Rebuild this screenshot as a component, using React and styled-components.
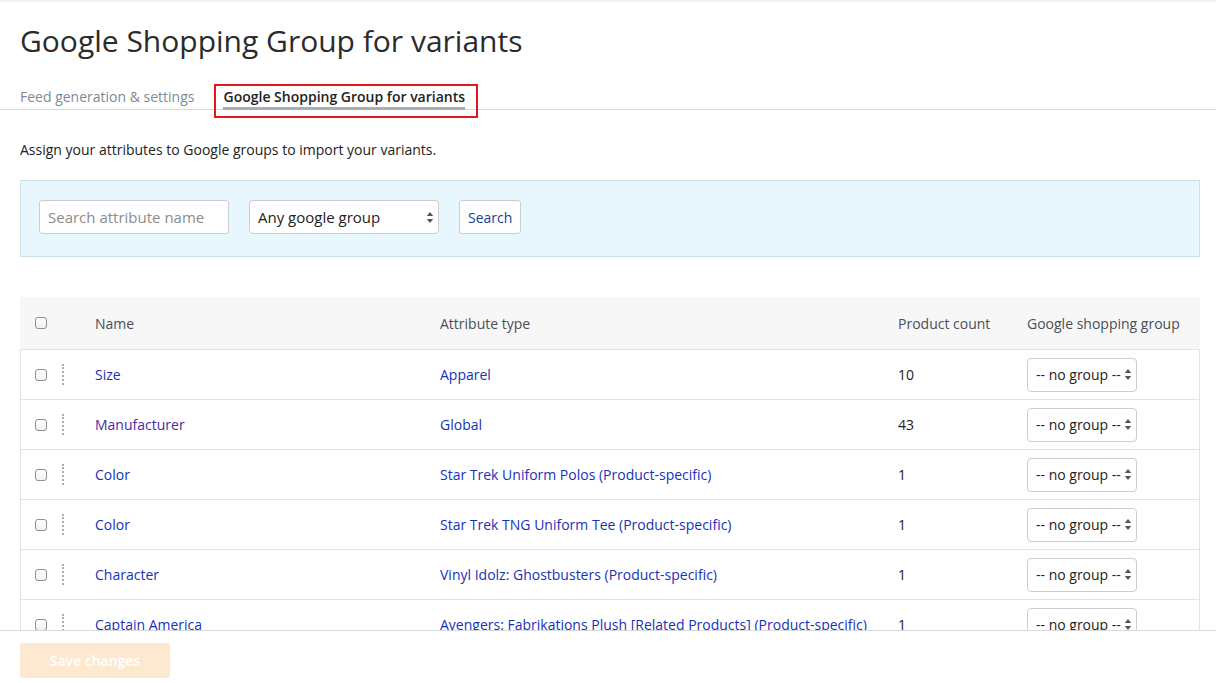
import React from "react";
import styled, { createGlobalStyle } from "styled-components";

const Global = createGlobalStyle`
  html, body { margin: 0; padding: 0; background: #fff; overflow: hidden; }
  body { font-family: "Open Sans", "Liberation Sans", sans-serif; color: #333; }
  * { box-sizing: border-box; }
`;

const Page = styled.div`
  height: 683px;
  border-top: 2px solid #f3f3f3;
  overflow: hidden;
`;

const Header = styled.div`
  padding: 0 20px;
`;

const Title = styled.h1`
  margin: 0;
  padding-top: 20px;
  font-size: 30px;
  font-weight: 400;
  line-height: 38px;
  color: #2b2b2b;
`;

const Tabs = styled.div`
  display: flex;
  align-items: flex-end;
  gap: 29px;
  margin-top: 27px;
  padding: 0 20px;
  border-bottom: 1px solid #d9d9d9;
`;

const Tab = styled.div`
  position: relative;
  font-size: 14px;
  line-height: 20px;
  color: ${(p) => (p.$active ? "#222" : "#7d8a96")};
  font-weight: ${(p) => (p.$active ? 600 : 400)};
  border-bottom: 3px solid ${(p) => (p.$active ? "#a6adb4" : "transparent")};
  margin-bottom: -1px;
  ${(p) =>
    p.$active &&
    `
    &::after {
      content: "";
      position: absolute;
      left: -9px; right: -13px; top: -3px; bottom: -11px;
      border: 2px solid #e3161b;
    }
  `}
`;

const Body = styled.div`
  padding: 0 16px 0 20px;
`;

const Intro = styled.p`
  margin: 30px 0 20px;
  font-size: 14px;
  line-height: 20px;
  color: #222;
`;

const Filters = styled.div`
  display: flex;
  align-items: flex-start;
  gap: 20px;
  height: 77px;
  padding: 19px 18px 0;
  background: #e8f6fd;
  border: 1px solid #cde0ea;
`;

const Input = styled.div`
  width: 190px;
  height: 34px;
  border: 1px solid #c9ced3;
  border-radius: 3px;
  background: #fff;
  padding: 0 8px;
  display: flex;
  align-items: center;
  font-size: 15px;
  color: #8c8c8c;
`;

const SelectBox = styled.div`
  width: ${(p) => p.$w}px;
  height: 34px;
  border: 1px solid #c9ced3;
  border-radius: 4px;
  background: #fff;
  padding: 0 4px 0 8px;
  display: flex;
  align-items: center;
  justify-content: space-between;
  font-size: ${(p) => p.$fs || 14}px;
  color: #222;
  white-space: nowrap;
`;

const Button = styled.div`
  height: 34px;
  padding: 0 8px;
  border: 1px solid #c9ced3;
  border-radius: 3px;
  background: #fff;
  display: flex;
  align-items: center;
  font-size: 14px;
  color: #1a3d8f;
`;

const Table = styled.div`
  margin-top: 40px;
`;

const Row = styled.div`
  display: grid;
  grid-template-columns: 33px 41px 345px 458px 129px 1fr;
  align-items: center;
  height: ${(p) => (p.$head ? 53 : 50)}px;
  background: ${(p) => (p.$head ? "#f7f7f7" : "#fff")};
  border-bottom: 1px solid #e3e3e3;
  border-left: 1px solid ${(p) => (p.$head ? "transparent" : "#e3e3e3")};
  border-right: 1px solid ${(p) => (p.$head ? "transparent" : "#e3e3e3")};
  font-size: 14px;
  color: #222;
`;

const Cell = styled.div`
  white-space: nowrap;
  color: ${(p) => (p.$head ? "#4a4f55" : "inherit")};
`;

const CheckCell = styled.div`
  display: flex;
  padding-left: 14px;
`;

const Check = styled.span`
  display: block;
  width: 12px;
  height: 12px;
  border: 1px solid #8f8f8f;
  border-radius: 3px;
  background: linear-gradient(#fff, #f1f1f1);
`;

const Handle = styled.span`
  display: block;
  margin-left: 8px;
  width: 0;
  height: 21px;
  border-left: 2px dotted #a9b0b8;
`;

const Link = styled.span`
  color: ${(p) => (p.$visited ? "#4b2aa8" : "#1732b8")};
`;

const Arrows = () => (
  <svg width="8" height="13" viewBox="0 0 8 13">
    <path d="M4 1 L7.2 5 H0.8 Z" fill="#555" />
    <path d="M4 12 L7.2 8 H0.8 Z" fill="#555" />
  </svg>
);

const Footer = styled.div`
  position: fixed;
  left: 0;
  right: 0;
  bottom: 0;
  height: 53px;
  background: #fff;
  border-top: 1px solid #d9d9d9;
  padding: 12px 20px 0;
`;

const SaveButton = styled.div`
  width: 150px;
  height: 35px;
  border-radius: 3px;
  background: #fde9d0;
  color: #fff;
  font-size: 14px;
  font-weight: 600;
  display: flex;
  align-items: center;
  justify-content: center;
`;

const rows = [
  ["Size", "Apparel", "10", false],
  ["Manufacturer", "Global", "43", true],
  ["Color", "Star Trek Uniform Polos (Product-specific)", "1", false],
  ["Color", "Star Trek TNG Uniform Tee (Product-specific)", "1", false],
  ["Character", "Vinyl Idolz: Ghostbusters (Product-specific)", "1", false],
  ["Captain America", "Avengers: Fabrikations Plush [Related Products] (Product-specific)", "1", false],
];

export default function App() {
  return (
    <Page>
      <Global />
      <Header>
        <Title>Google Shopping Group for variants</Title>
      </Header>
      <Tabs>
        <Tab>Feed generation &amp; settings</Tab>
        <Tab $active>Google Shopping Group for variants</Tab>
      </Tabs>
      <Body>
        <Intro>Assign your attributes to Google groups to import your variants.</Intro>
        <Filters>
          <Input>Search attribute name</Input>
          <SelectBox $w={190} $fs={15}>
            <span>Any google group</span>
            <Arrows />
          </SelectBox>
          <Button>Search</Button>
        </Filters>
        <Table>
          <Row $head>
            <CheckCell>
              <Check />
            </CheckCell>
            <span />
            <Cell $head>Name</Cell>
            <Cell $head>Attribute type</Cell>
            <Cell $head>Product count</Cell>
            <Cell $head>Google shopping group</Cell>
          </Row>
          {rows.map(([name, type, count, visited], i) => (
            <Row key={i}>
              <CheckCell>
                <Check />
              </CheckCell>
              <Handle />
              <Cell>
                <Link $visited={visited}>{name}</Link>
              </Cell>
              <Cell>
                <Link>{type}</Link>
              </Cell>
              <Cell>{count}</Cell>
              <Cell>
                <SelectBox $w={110}>
                  <span>-- no group --</span>
                  <Arrows />
                </SelectBox>
              </Cell>
            </Row>
          ))}
        </Table>
      </Body>
      <Footer>
        <SaveButton>Save changes</SaveButton>
      </Footer>
    </Page>
  );
}
